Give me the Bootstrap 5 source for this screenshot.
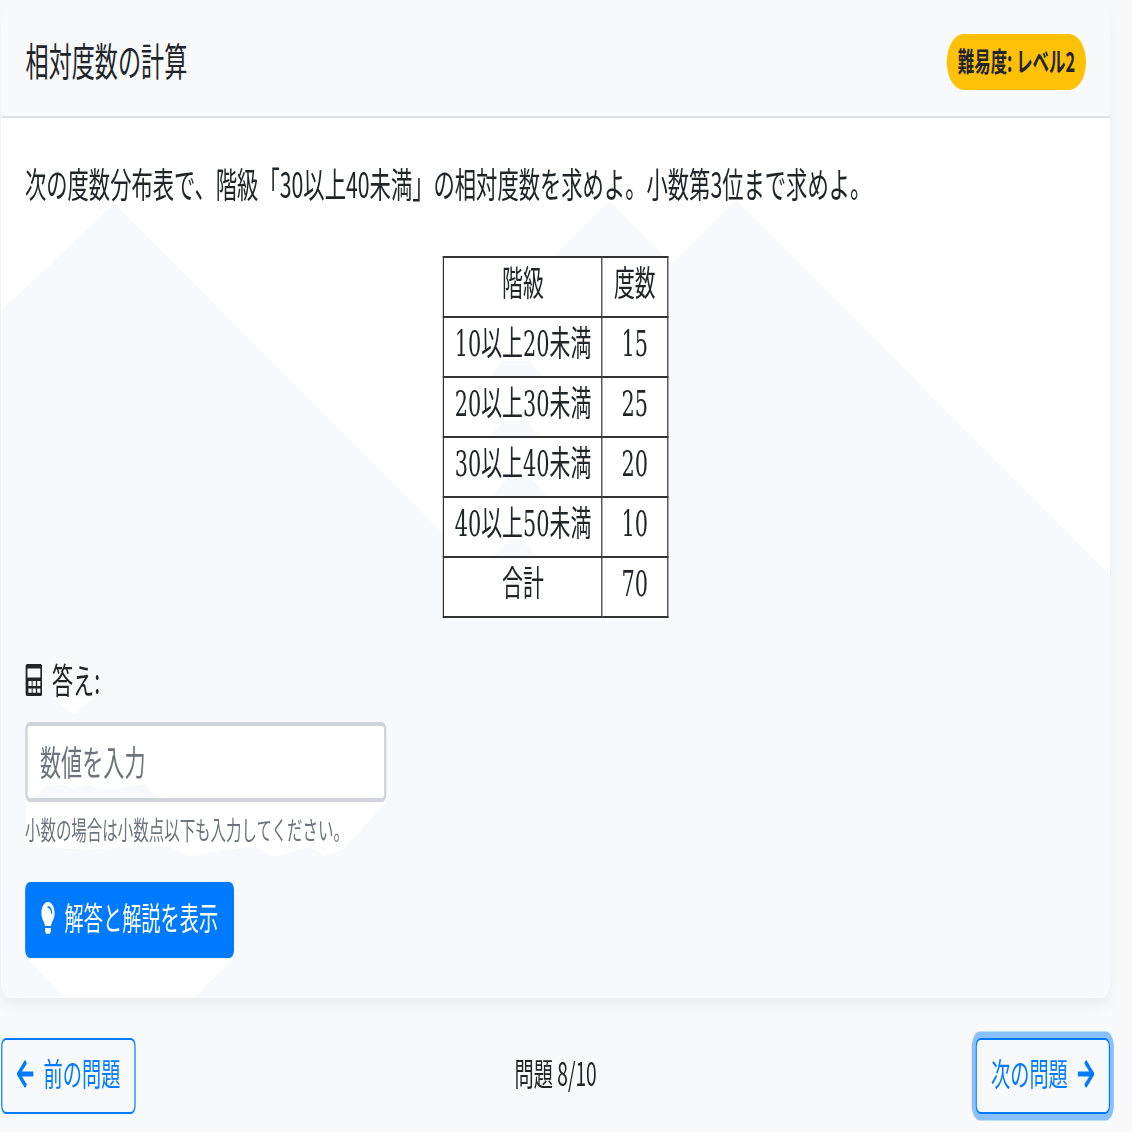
<!DOCTYPE html>
<html lang="ja">
<head>
<meta charset="utf-8">
<title>相対度数の計算</title>
<link href="https://cdn.jsdelivr.net/npm/bootstrap@5.3.0/dist/css/bootstrap.min.css" rel="stylesheet">
<style>
html,body{margin:0;height:100%;overflow:hidden;background:#f8f9fa;}
body{font-family:"Noto Sans CJK JP",sans-serif;color:#212529;}
.stage{width:943.33px;height:566px;transform:scale(1.2,2);transform-origin:0 0;padding:3px 18px 0 .8px;}
.qcard{border:0;border-radius:8px;box-shadow:0 4px 8px rgba(0,0,0,.05);background:#fff;}
.qhead{height:56px;padding:0 20px 0 20.5px;background:#f8f9fa;border-bottom:1px solid #dfe1e3;border-radius:8px 8px 0 0!important;}
.qtitle{font-size:19.25px;font-weight:400;margin:0;line-height:1.2;}
.lvl{font-size:13.7px;line-height:1;padding:6.8px 9.4px;background:#ffc107;color:#212529;border-radius:14px;font-weight:700;white-space:nowrap;position:relative;top:.5px;}
.qbody{padding:19.4px 20px 20px;height:439.5px;
background:#fff url("data:image/svg+xml,%3Csvg xmlns='http://www.w3.org/2000/svg' viewBox='1 118 1109 879' preserveAspectRatio='none'%3E%3Cpath fill='%23f8f9fd' d='M1 310L114 203 443 532V257H552L609 200 672.5 263.5 736 200 1110 574V997H1Z'/%3E%3Cpath fill='%23fff' d='M444 257H668V616H444ZM27 724H385V802H27ZM26 802H385L342 848 325 855 310 845 275 855 255 845 235 847 190 855 170 845 120 846 80 848 40 845 26 830ZM28 957H232L193 997H66ZM52 696H95L73 713Z'/%3E%3Cpath fill='%23f8f9fd' d='M490 376L503 360H530L543 376ZM490 436L503 420H526L539 436ZM492 496L508 476H530L548 496ZM493 556L510 538H522L537 556ZM30 800L45 785 62 783 75 788 85 783 105 788 125 786 145 782 160 800Z'/%3E%3C/svg%3E") 0 0/100% 100% no-repeat;border-radius:0 0 8px 8px;}
.qtext{font-size:17.75px;line-height:26.4px;margin:0 0 23.4px;}
.table.ftable{width:187.5px;margin:0 auto 18.4px;--bs-table-bg:transparent;border-color:#333;font-family:"DejaVu Serif","Noto Sans CJK JP",serif;font-size:17.4px;color:#212529;table-layout:fixed;}
.table.ftable>:not(caption)>*>*{padding:0 0 1.8px;height:29.9px;line-height:25px;text-align:center;font-weight:400;border-width:1px;vertical-align:middle;}
.table.ftable .c1{width:132px;}
.alabel{font-size:17.6px;line-height:26.4px;margin-bottom:7.3px;gap:8px;}
.calc{width:14.5px;height:16px;fill:#212529;}
.ainput{width:301px;height:40.5px;border:2px solid #ced4da;border-radius:4px;padding:0 10.5px;font-size:17.6px;line-height:26.4px;background:transparent;color:#212529;}
.ainput::placeholder{color:#6c757d;opacity:1;}
.hint{font-size:12.9px;line-height:18px;color:#6c757d;margin:4.5px 0 17px;}
.sbtn{--bs-btn-bg:#007bff;--bs-btn-border-color:#007bff;height:38px;width:174px;padding:0 0 0 12px;font-size:16px;line-height:24px;border-radius:4px;gap:8px;}
.sbtn span,.navbtn span,.prog{margin-bottom:3px;}
.bulb{width:12px;height:16px;fill:#fff;transform:scaleX(-1);margin-bottom:1.5px;}
.qfoot{margin-top:20px;}
.navbtn{--bs-btn-color:#007bff;--bs-btn-border-color:#007bff;height:38px;padding:0 12px;font-size:16px;line-height:24px;border-radius:4px;gap:8.5px;}
.navbtn svg{width:14px;height:16px;fill:#007bff;margin-bottom:1px;}
.navnext{box-shadow:0 0 0 3.2px rgba(0,123,255,.45);}
.prog{font-size:16px;}
</style>
</head>
<body>
<div class="stage">
  <div class="card qcard">
    <div class="card-header qhead d-flex justify-content-between align-items-center">
      <h5 class="qtitle">相対度数の計算</h5>
      <span class="lvl">難易度: レベル2</span>
    </div>
    <div class="card-body qbody">
      <p class="qtext">次の度数分布表で、階級「30以上40未満」の相対度数を求めよ。小数第3位まで求めよ。</p>
      <table class="table table-bordered ftable">
        <thead><tr><th class="c1">階級</th><th>度数</th></tr></thead>
        <tbody>
          <tr><td>10以上20未満</td><td>15</td></tr>
          <tr><td>20以上30未満</td><td>25</td></tr>
          <tr><td>30以上40未満</td><td>20</td></tr>
          <tr><td>40以上50未満</td><td>10</td></tr>
          <tr><td>合計</td><td>70</td></tr>
        </tbody>
      </table>
      <label class="alabel d-flex align-items-center" for="ans">
        <svg class="calc" viewBox="0 0 448 512"><path fill-rule="evenodd" d="M48 0H400C426 0 448 22 448 48V464C448 490 426 512 400 512H48C22 512 0 490 0 464V48C0 22 22 0 48 0ZM52 70V215H396V70ZM78 270V350H164V270ZM190 270V350H276V270ZM310 270V350H396V270ZM78 393V458H164V393ZM190 393V458H276V393ZM310 393V458H396V393Z"/></svg>
        <span>答え:</span>
      </label>
      <input id="ans" class="ainput d-block" type="text" placeholder="数値を入力">
      <div class="hint">小数の場合は小数点以下も入力してください。</div>
      <button class="btn btn-primary sbtn d-flex align-items-center" type="button">
        <svg class="bulb" viewBox="0 0 352 512"><path d="M96.06 454.35c.01 6.29 1.87 12.45 5.36 17.69l17.09 25.69a31.99 31.99 0 0 0 26.64 14.28h61.71a31.99 31.99 0 0 0 26.64-14.28l17.09-25.69a31.989 31.989 0 0 0 5.36-17.69l.04-38.35H96.01l.05 38.35zM0 176c0 44.37 16.45 84.85 43.56 115.78 16.52 18.85 42.36 58.23 52.21 91.45.04.26.07.52.11.78h160.24c.04-.26.07-.51.11-.78 9.85-33.22 35.69-72.6 52.21-91.45C335.55 260.85 352 220.37 352 176 352 78.61 272.91-.3 175.45 0 73.44.31 0 82.97 0 176zm176-80c-44.11 0-80 35.89-80 80 0 8.84-7.16 16-16 16s-16-7.16-16-16c0-61.76 50.24-112 112-112 8.84 0 16 7.16 16 16s-7.16 16-16 16z"/></svg>
        <span>解答と解説を表示</span>
      </button>
    </div>
  </div>
  <div class="qfoot d-flex justify-content-between align-items-center">
    <button class="btn btn-outline-primary navbtn d-flex align-items-center" type="button">
      <svg viewBox="0 0 448 512"><path d="M257.5 445.1l-22.2 22.2c-9.4 9.4-24.6 9.4-33.9 0L7 273c-9.4-9.4-9.4-24.6 0-33.9L201.4 44.7c9.4-9.4 24.6-9.4 33.9 0l22.2 22.2c9.5 9.5 9.3 25-.4 34.3L136.6 216H424c13.3 0 24 10.7 24 24v32c0 13.3-10.7 24-24 24H136.6l120.5 114.8c9.8 9.3 10 24.8.4 34.3z"/></svg>
      <span>前の問題</span>
    </button>
    <span class="prog">問題 8/10</span>
    <button class="btn btn-outline-primary navbtn navnext d-flex align-items-center" type="button">
      <span>次の問題</span>
      <svg viewBox="0 0 448 512"><path d="M190.5 66.9l22.2-22.2c9.4-9.4 24.6-9.4 33.9 0L441 239c9.4 9.4 9.4 24.6 0 33.9L246.6 467.3c-9.4 9.4-24.6 9.4-33.9 0l-22.2-22.2c-9.5-9.5-9.3-25 .4-34.3L311.4 296H24c-13.3 0-24-10.7-24-24v-32c0-13.3 10.7-24 24-24h287.4L190.9 101.2c-9.8-9.3-10-24.8-.4-34.3z"/></svg>
    </button>
  </div>
</div>
<script src="https://cdn.jsdelivr.net/npm/bootstrap@5.3.0/dist/js/bootstrap.bundle.min.js"></script>
</body>
</html>
